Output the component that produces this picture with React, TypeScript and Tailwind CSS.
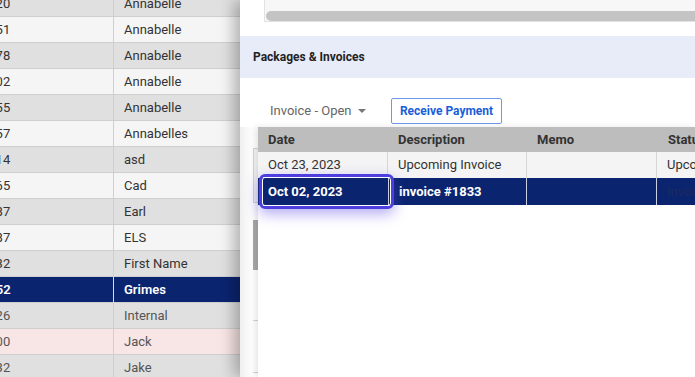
import React from 'react'

type Row = { id: string; name: string; tone: 'dark' | 'light' | 'sel' | 'pink'; muted?: boolean }

const rows: Row[] = [
  { id: '1420', name: 'Annabelle', tone: 'dark' },
  { id: '3351', name: 'Annabelle', tone: 'light' },
  { id: '2478', name: 'Annabelle', tone: 'dark' },
  { id: '5902', name: 'Annabelle', tone: 'light' },
  { id: '6655', name: 'Annabelle', tone: 'dark' },
  { id: '4957', name: 'Annabelles', tone: 'light' },
  { id: '3314', name: 'asd', tone: 'dark' },
  { id: '2365', name: 'Cad', tone: 'light' },
  { id: '3987', name: 'Earl', tone: 'dark' },
  { id: '6287', name: 'ELS', tone: 'light' },
  { id: '1932', name: 'First Name', tone: 'dark' },
  { id: '7652', name: 'Grimes', tone: 'sel' },
  { id: '8226', name: 'Internal', tone: 'dark', muted: true },
  { id: '2900', name: 'Jack', tone: 'pink', muted: true },
  { id: '1432', name: 'Jake', tone: 'dark', muted: true },
]

const toneBg: Record<Row['tone'], string> = {
  dark: 'bg-[#e0e0e0]',
  light: 'bg-[#f5f5f5]',
  sel: 'bg-[#0b2470]',
  pink: 'bg-[#f8e5e5]',
}

function PeopleList() {
  return (
    <div className="w-[240px] shrink-0 overflow-hidden">
      <div className="-mt-[9px]">
        {rows.map((r) => {
          const sel = r.tone === 'sel'
          const text = sel ? 'text-white font-semibold' : r.muted ? 'text-[#555]' : 'text-[#333]'
          return (
            <div key={r.id + r.name} className={`flex h-[26px] border-b border-[#cfcfcf] ${toneBg[r.tone]} ${text}`}>
              <div className={`w-[114px] shrink-0 overflow-hidden flex items-center border-r ${sel ? 'border-[#d6dbe8]' : 'border-[#cfcfcf]'}`}>
                <span className="-ml-[19px] whitespace-nowrap">{r.id}</span>
              </div>
              <div className="flex-1 flex items-center pl-[10px] whitespace-nowrap">{r.name}</div>
            </div>
          )
        })}
      </div>
    </div>
  )
}

function InvoiceTable() {
  return (
    <div className="flex-1 flex flex-col bg-white shadow-[-3px_0_6px_rgba(0,0,0,0.10)] min-w-0">
      <div className="grid grid-cols-[130px_139px_130px_1fr] h-[25px] bg-[#bdbdbd] font-bold text-[#333]">
        <div className="pl-[10px] flex items-center">Date</div>
        <div className="pl-[10px] flex items-center">Description</div>
        <div className="pl-[10px] flex items-center">Memo</div>
        <div className="pl-[11px] flex items-center whitespace-nowrap">Status</div>
      </div>
      <div className="grid grid-cols-[130px_139px_130px_1fr] h-[26px] bg-[#f4f4f4] text-[#333]">
        <div className="pl-[10px] flex items-center border-r border-[#d6d6d6]">Oct 23, 2023</div>
        <div className="pl-[10px] flex items-center border-r border-[#d6d6d6] whitespace-nowrap">Upcoming Invoice</div>
        <div className="pl-[10px] flex items-center border-r border-[#d6d6d6]"></div>
        <div className="pl-[10px] flex items-center whitespace-nowrap">Upcoming</div>
      </div>
      <div className="grid grid-cols-[130px_139px_130px_1fr] h-[27px] bg-[#0b2470] text-white font-bold">
        <div className="relative pl-[10px] flex items-center">
          Oct 02, 2023
          {/* focused cell ring */}
          <div className="absolute left-[1px] -top-[4px] -right-[6px] -bottom-[4px] border-[3px] border-[#4d3ee0] rounded-[6px] shadow-[0_5px_14px_rgba(90,70,230,0.45)]">
            <div className="absolute inset-0 border border-white rounded-[3px]" />
          </div>
        </div>
        <div className="pl-[10px] flex items-center border-l border-r border-[#c9cfe0] whitespace-nowrap">invoice #1833</div>
        <div className="pl-[10px] flex items-center border-r border-[#c9cfe0]"></div>
        <div className="pl-[10px] flex items-center text-[#1c2b5c] font-normal whitespace-nowrap">Invoice</div>
      </div>
      <div className="flex-1" />
    </div>
  )
}

export default function App() {
  return (
    <div className="w-[695px] h-[377px] overflow-hidden flex bg-white text-[13px] font-['Roboto',sans-serif]">
      <PeopleList />

      <div className="flex-1 flex flex-col bg-white shadow-[-6px_0_14px_rgba(0,0,0,0.28)] z-10 min-w-0">
        {/* top card with its scrollbar */}
        <div className="h-[36px] pl-[24px] shrink-0">
          <div className="h-[22px] bg-[#f7f7f7] border-l border-b border-[#e2e2e2] flex flex-col justify-end">
            <div className="h-[10px] ml-px bg-[#c4c4c4] rounded-l-full" />
          </div>
        </div>

        <div className="h-[42px] shrink-0 bg-[#e8ecf9] flex items-center pl-[13px] text-[12px] font-bold text-[#222]">
          Packages &amp; Invoices
        </div>

        <div className="h-[49px] shrink-0 flex items-end pl-[30px] pb-[3px]">
          <div className="h-[26px] flex items-center text-[#666] w-[121px]">
            Invoice - Open
            <span className="ml-[6px] w-0 h-0 border-l-[4px] border-r-[4px] border-t-[4px] border-l-transparent border-r-transparent border-t-[#777]" />
          </div>
          <button className="h-[26px] w-[111px] border border-[#6f98ea] rounded-[2px] text-[#1a5fd8] font-bold text-[12px] bg-white">
            Receive Payment
          </button>
        </div>

        <div className="flex-1 flex min-h-0">
          <div className="w-[13px] shrink-0 bg-gradient-to-r from-[#efefef] to-white" />
          {/* edge of the grid behind the popup */}
          <div className="w-[5px] shrink-0 flex flex-col">
            <div className="h-[21px]" />
            <div className="h-[55px] border-l border-y border-[#d4d4d4] bg-[#f4f4f4]" />
            <div className="h-[17px]" />
            <div className="h-[50px] bg-[#a9a9a9]" />
            <div className="h-[51px] border-b border-[#d4d4d4]" />
            <div className="h-[52px] border-b border-[#d4d4d4]" />
          </div>
          <InvoiceTable />
        </div>
      </div>
    </div>
  )
}
